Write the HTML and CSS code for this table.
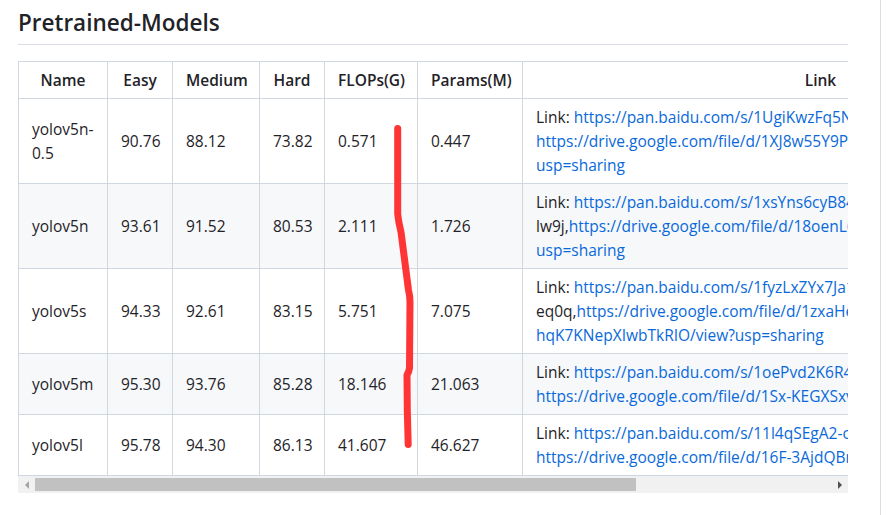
FILE: index.html
```html
<!DOCTYPE html>
<html lang="en">
<head>
<meta charset="utf-8">
<title>Pretrained-Models</title>
<link rel="stylesheet" href="styles.css">
</head>
<body>
<div class="page">
  <main class="main">
    <h2 class="title">Pretrained-Models</h2>
    <div class="table-wrap">
      <table class="models">
        <colgroup>
          <col class="c-name"><col class="c-easy"><col class="c-medium"><col class="c-hard"><col class="c-flops"><col class="c-params"><col class="c-link">
        </colgroup>
        <thead>
          <tr><th>Name</th><th>Easy</th><th>Medium</th><th>Hard</th><th>FLOPs(G)</th><th>Params(M)</th><th>Link</th></tr>
        </thead>
        <tbody>
          <tr>
            <td>yolov5n-0.5</td><td>90.76</td><td>88.12</td><td>73.82</td><td>0.571</td><td>0.447</td>
            <td class="link-cell">Link: <a href="#">https://pan.baidu.com/s/1UgiKwzFq5NXI2y-Zui1kiA</a> Pwd: s9ne<br><a href="#">https://drive.google.com/file/d/1XJ8w55Y9Po7Y5WP4X1Kg1a77ok2tL_KY/view?</a><br><a href="#">usp=sharing</a></td>
          </tr>
          <tr>
            <td>yolov5n</td><td>93.61</td><td>91.52</td><td>80.53</td><td>2.111</td><td>1.726</td>
            <td class="link-cell">Link: <a href="#">https://pan.baidu.com/s/1xsYns6cyB84aTDS5R4Lz7w</a> Pwd:<br>lw9j,<a href="#">https://drive.google.com/file/d/18oenL6tjFkdR1f5IgpYeQfDFqU4w3jEr/view?</a><br><a href="#">usp=sharing</a></td>
          </tr>
          <tr>
            <td>yolov5s</td><td>94.33</td><td>92.61</td><td>83.15</td><td>5.751</td><td>7.075</td>
            <td class="link-cell">Link: <a href="#">https://pan.baidu.com/s/1fyzLxZYx7Ja1_PCIWRhxbw</a> Pwd:<br>eq0q,<a href="#">https://drive.google.com/file/d/1zxaHeLDyID9YU4-</a><br><a href="#">hqK7KNepXIwbTkRIO/view?usp=sharing</a></td>
          </tr>
          <tr>
            <td>yolov5m</td><td>95.30</td><td>93.76</td><td>85.28</td><td>18.146</td><td>21.063</td>
            <td class="link-cell">Link: <a href="#">https://pan.baidu.com/s/1oePvd2K6R4-gT0g7EERmdQ</a> Pwd: jmtk<br><a href="#">https://drive.google.com/file/d/1Sx-KEGXSxvPMS35JhzQKeRBiqC98VDDI</a></td>
          </tr>
          <tr>
            <td>yolov5l</td><td>95.78</td><td>94.30</td><td>86.13</td><td>41.607</td><td>46.627</td>
            <td class="link-cell">Link: <a href="#">https://pan.baidu.com/s/11l4qSEgA2-c7e8lpRt8iFw</a> Pwd: 0mq7<br><a href="#">https://drive.google.com/file/d/16F-3AjdQBn9p3nMhStUxfDNAE_1bOYKJ</a></td>
          </tr>
        </tbody>
      </table>
    </div>
    <div class="scrollbar" aria-hidden="true">
      <span class="sb-btn sb-left"><i class="arrow arrow-left"></i></span>
      <span class="sb-track"><span class="sb-thumb"></span></span>
      <span class="sb-btn sb-right"><i class="arrow arrow-right"></i></span>
    </div>
  </main>
  <div class="rail"></div>
  <svg class="scribble" width="889" height="515" viewBox="0 0 889 515" aria-hidden="true">
    <path d="M397.7 128.5 L397.7 214 Q398.5 222 401 232 L408.5 290 Q410 296 410 302 L409.5 368 Q409 372 407 375 L407.3 410 L408.2 444.5" fill="none" stroke="#ff3535" stroke-width="7" stroke-linecap="round" stroke-linejoin="round"/>
  </svg>
</div>
</body>
</html>
```
FILE: styles.css
```css
html, body {
  margin: 0;
  padding: 0;
  background: #ffffff;
}

body {
  font-family: "Open Sans", "Noto Sans", "Liberation Sans", sans-serif;
  font-size: 15.5px;
  line-height: 24px;
  color: #1f2328;
}

.page {
  position: relative;
  display: flex;
  min-height: 100vh;
}

.main {
  width: 830px;
  padding: 8px 0 0 18px;
  flex: none;
}

.rail {
  flex: 1;
  margin-left: 32px;
  border-left: 1px solid #d8dee4;
}

.title {
  margin: 0 0 16px;
  padding: 0 0 6px;
  font-size: 22.5px;
  line-height: 30px;
  font-weight: 600;
  border-bottom: 1px solid #d8dee4;
}

.table-wrap {
  width: 830px;
  overflow: hidden;
}

.models {
  border-collapse: collapse;
  border-spacing: 0;
  table-layout: fixed;
  width: 1100px;
}

.c-name { width: 89px; }
.c-easy { width: 65px; }
.c-medium { width: 87px; }
.c-hard { width: 65px; }
.c-flops { width: 93px; }
.c-params { width: 105px; }
.c-link { width: 596px; }

.models th,
.models td {
  padding: 6px 13px;
  border: 1px solid #d0d7de;
  vertical-align: middle;
}

.models th {
  font-weight: 600;
  text-align: center;
}

.models td {
  text-align: left;
}

.models tbody tr:nth-child(even) {
  background: #f6f8fa;
}

.link-cell {
  white-space: nowrap;
}

.link-cell a {
  color: #0969da;
  text-decoration: none;
}

.scrollbar {
  display: flex;
  height: 17px;
  background: #f1f1f1;
}

.sb-btn {
  width: 17px;
  flex: none;
  display: flex;
  align-items: center;
  justify-content: center;
}

.sb-track {
  flex: 1;
  padding: 2px 0;
}

.sb-thumb {
  display: block;
  width: 601px;
  height: 13px;
  background: #c1c1c1;
}

.arrow {
  width: 0;
  height: 0;
  border-top: 4px solid transparent;
  border-bottom: 4px solid transparent;
}

.arrow-left {
  border-right: 4px solid #a3a3a3;
}

.arrow-right {
  border-left: 4px solid #505050;
}

.scribble {
  position: absolute;
  left: 0;
  top: 0;
  pointer-events: none;
}
```
